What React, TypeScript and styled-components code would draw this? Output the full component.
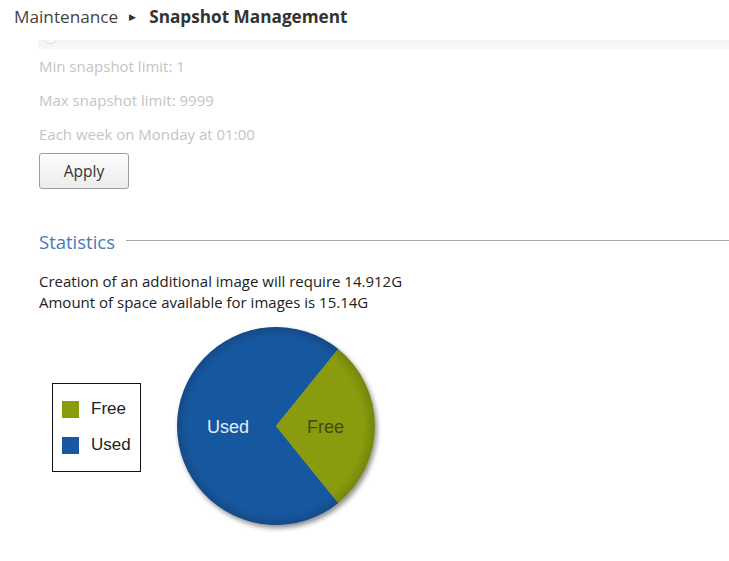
import * as React from 'react';
import styled, { createGlobalStyle } from 'styled-components';

const GlobalStyle = createGlobalStyle`
    html, body {
        margin: 0;
        padding: 0;
        background: #ffffff;
    }
    body {
        font-family: 'Open Sans', 'Noto Sans', sans-serif;
        color: #222;
    }
`;

const Page = styled.div`
    width: 729px;
    height: 561px;
    overflow: hidden;
    background: #fff;
`;

const Breadcrumb = styled.div`
    display: flex;
    align-items: center;
    height: 32px;
    padding: 0 0 2px 14px;
    font-size: 17.2px;
    color: #333;
`;

const Crumb = styled.span<{ $current?: boolean }>`
    font-weight: ${(p) => (p.$current ? 700 : 400)};
    color: ${(p) => (p.$current ? '#333' : '#444')};
`;

const Caret = styled.span`
    font-size: 9px;
    color: #333;
    margin: 0 13px 0 11px;
`;

const PanelEdge = styled.div`
    margin: 6px 0 0 38px;
    height: 9px;
    background: linear-gradient(#f3f3f3, #f8f8f8);
    overflow: hidden;
    position: relative;
`;

const Radio = styled.span`
    position: absolute;
    left: 5px;
    top: -11px;
    width: 13px;
    height: 13px;
    border-radius: 50%;
    border: 1px solid #ddd;
    background: #fafafa;
`;

const Content = styled.div`
    padding-left: 39px;
`;

const Setting = styled.div`
    height: 34px;
    line-height: 34px;
    font-size: 15px;
    color: #c4c4c4;
`;

const Button = styled.button`
    margin-top: 2px;
    width: 90px;
    height: 36px;
    border: 1px solid #9c9c9c;
    border-radius: 3px;
    background: linear-gradient(#fdfdfd, #ececec);
    font-family: 'Open Sans', 'Noto Sans', sans-serif;
    font-size: 15.5px;
    color: #333;
    cursor: pointer;
`;

const Section = styled.div`
    margin-top: 40px;
`;

const SectionTitle = styled.div`
    display: flex;
    align-items: center;
    gap: 11px;
    height: 24px;
    font-size: 18.5px;
    color: #4b78b5;

    &::after {
        content: '';
        flex: 1;
        height: 1px;
        background: #a8a8a8;
        margin-top: -2px;
    }
`;

const Info = styled.div`
    margin-top: 18px;
    font-size: 15px;
    line-height: 21px;
    color: #222;
`;

const Chart = styled.div`
    display: flex;
    align-items: center;
    gap: 30px;
    margin-top: 8px;
    padding-left: 52px;
`;

const Legend = styled.div`
    width: 89px;
    height: 89px;
    border: 1px solid #111;
    display: flex;
    flex-direction: column;
    justify-content: center;
    gap: 14px;
    padding-left: 9px;
    box-sizing: border-box;
    font-family: 'Liberation Sans', Arial, sans-serif;
    font-size: 17px;
    color: #222;
`;

const LegendItem = styled.div`
    display: flex;
    align-items: center;
    gap: 12px;
    height: 22px;
`;

const Swatch = styled.span<{ $color: string }>`
    width: 17px;
    height: 17px;
    background: ${(p) => p.$color};
`;

const PieLabel = styled.text`
    font-family: 'Liberation Sans', Arial, sans-serif;
    font-size: 18px;
`;

const slices = [
    { name: 'Free', color: '#8a9b0c', shade: '#75850a' },
    { name: 'Used', color: '#1759a0', shade: '#124a88' },
];

function Pie() {
    const cx = 105;
    const cy = 105;
    const r = 99;
    const half = (51 * Math.PI) / 180;
    const top = { x: cx + r * Math.cos(-half), y: cy + r * Math.sin(-half) };
    const bottom = { x: cx + r * Math.cos(half), y: cy + r * Math.sin(half) };

    return (
        <svg width="212" height="212" viewBox="0 0 212 212">
            <defs>
                <radialGradient id="freeFill" cx={cx} cy={cy} r={r} gradientUnits="userSpaceOnUse">
                    <stop offset="0%" stopColor={slices[0].color} />
                    <stop offset="88%" stopColor={slices[0].color} />
                    <stop offset="100%" stopColor={slices[0].shade} />
                </radialGradient>
                <radialGradient id="usedFill" cx={cx} cy={cy} r={r} gradientUnits="userSpaceOnUse">
                    <stop offset="0%" stopColor={slices[1].color} />
                    <stop offset="88%" stopColor={slices[1].color} />
                    <stop offset="100%" stopColor={slices[1].shade} />
                </radialGradient>
                <filter id="pieShadow" x="-10%" y="-10%" width="125%" height="125%">
                    <feGaussianBlur in="SourceAlpha" stdDeviation="2.5" />
                    <feOffset dx="2" dy="3" result="blur" />
                    <feComponentTransfer>
                        <feFuncA type="linear" slope="0.45" />
                    </feComponentTransfer>
                    <feMerge>
                        <feMergeNode />
                        <feMergeNode in="SourceGraphic" />
                    </feMerge>
                </filter>
            </defs>
            <g filter="url(#pieShadow)">
                <path
                    d={`M ${cx} ${cy} L ${top.x} ${top.y} A ${r} ${r} 0 1 0 ${bottom.x} ${bottom.y} Z`}
                    fill="url(#usedFill)"
                />
                <path
                    d={`M ${cx} ${cy} L ${top.x} ${top.y} A ${r} ${r} 0 0 1 ${bottom.x} ${bottom.y} Z`}
                    fill="url(#freeFill)"
                />
            </g>
            <PieLabel x={36} y={112} fill="#e4ecf5">
                Used
            </PieLabel>
            <PieLabel x={136} y={112} fill="#3d4a1c">
                Free
            </PieLabel>
        </svg>
    );
}

export default function App() {
    return (
        <Page>
            <GlobalStyle />
            <Breadcrumb>
                <Crumb>Maintenance</Crumb>
                <Caret>▶</Caret>
                <Crumb $current>Snapshot Management</Crumb>
            </Breadcrumb>
            <PanelEdge>
                <Radio />
            </PanelEdge>
            <Content>
                <Setting>Min snapshot limit: 1</Setting>
                <Setting>Max snapshot limit: 9999</Setting>
                <Setting>Each week on Monday at 01:00</Setting>
                <Button type="button">Apply</Button>
                <Section>
                    <SectionTitle>Statistics</SectionTitle>
                    <Info>
                        <div>Creation of an additional image will require 14.912G</div>
                        <div>Amount of space available for images is 15.14G</div>
                    </Info>
                </Section>
            </Content>
            <Chart>
                <Legend>
                    {slices.map((s) => (
                        <LegendItem key={s.name}>
                            <Swatch $color={s.color} />
                            {s.name}
                        </LegendItem>
                    ))}
                </Legend>
                <Pie />
            </Chart>
        </Page>
    );
}
